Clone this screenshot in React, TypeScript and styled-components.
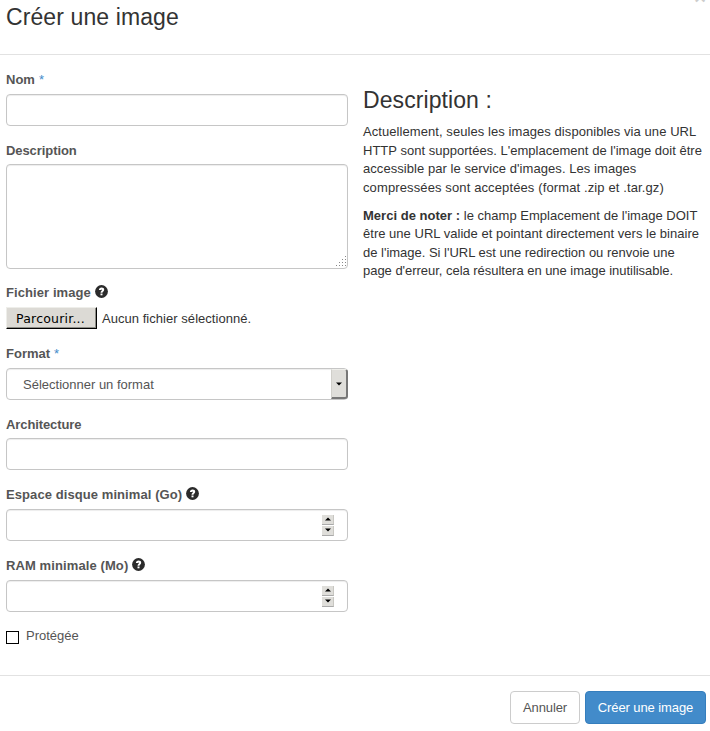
import React from "react";
import styled, { createGlobalStyle } from "styled-components";

const Global = createGlobalStyle`
  * { box-sizing: border-box; }
  body { margin: 0; background: #fff; overflow: hidden; }
  input, textarea, button { font: inherit; letter-spacing: inherit; }
`;

const Dialog = styled.form`
  position: relative;
  width: 710px;
  height: 731px;
  overflow: hidden;
  display: flex;
  flex-direction: column;
  background: #fff;
  color: #333;
  font: 13px/18px "Liberation Sans", Arial, sans-serif;
`;

const Header = styled.header`
  height: 55px;
  flex: none;
  padding: 4px 6px 0;
  border-bottom: 1px solid #e2e2e2;
`;

const Title = styled.h3`
  margin: 0;
  font-size: 23px;
  line-height: 27px;
  font-weight: 400;
  letter-spacing: 0.1px;
`;

const Close = styled.span`
  position: absolute;
  top: -13px;
  right: 4px;
  font-size: 20px;
  line-height: 20px;
  font-weight: 700;
  color: #ccc;
`;

const Body = styled.div`
  flex: none;
  height: 620px;
  display: grid;
  grid-template-columns: 342px 342px;
  column-gap: 15px;
  padding: 15px 5px 0 6px;
`;

const Fields = styled.div`
  display: flex;
  flex-direction: column;
`;

const Field = styled.div`
  margin-bottom: 15px;
`;

const Label = styled.label<{ $height: number; $spacing?: number; $inset?: number }>`
  display: flex;
  align-items: flex-start;
  height: ${(p) => p.$height}px;
  padding-top: ${(p) => p.$inset ?? 1}px;
  font-weight: 700;
  color: #555;
  white-space: pre;
  letter-spacing: ${(p) => p.$spacing ?? 0}px;
`;

const Required = styled.span`
  margin-left: 4px;
  font-weight: 400;
  color: #428bca;
`;

const Help = styled.svg`
  width: 13px;
  height: 13px;
  margin: 1px 0 0 4px;
`;

const Control = styled.div`
  display: flex;
  align-items: center;
  height: 32px;
  border: 1px solid #c6c6c6;
  border-radius: 4px;
  background: #fff;
  box-shadow: inset 0 1px 1px rgba(0, 0, 0, 0.075);
`;

const TextInput = styled.input`
  flex: 1;
  min-width: 0;
  height: 100%;
  padding: 0 12px;
  border: 0;
  outline: 0;
  background: transparent;
  color: #555;
  appearance: none;
`;

const AreaBox = styled(Control)`
  position: relative;
  height: 105px;
`;

const Area = styled.textarea`
  width: 100%;
  height: 100%;
  padding: 6px 12px;
  border: 0;
  outline: 0;
  resize: none;
  background: transparent;
`;

const Grip = styled.svg`
  position: absolute;
  right: 0;
  bottom: 0;
  width: 12px;
  height: 12px;
`;

const FileRow = styled.div`
  display: flex;
  align-items: center;
  gap: 5px;
  height: 22px;
`;

const FileStatus = styled.span`
  padding-top: 2px;
  letter-spacing: 0.04px;
`;

const Browse = styled.button`
  width: 91px;
  height: 22px;
  padding: 1px 2px 0 0;
  border: 1px solid;
  border-color: #eeeeea #000 #000 #eeeeea;
  box-shadow: inset -1px -1px 0 #8d8d87;
  background: #dcdad5;
  color: #000;
  font: 12.5px/18px "DejaVu Sans", sans-serif;
  letter-spacing: 0.2px;
`;

const SelectText = styled.span`
  flex: 1;
  padding: 2px 0 0 16px;
  color: #555;
`;

const SelectArrow = styled.span`
  display: flex;
  align-items: center;
  justify-content: center;
  width: 17px;
  height: 30px;
  margin-right: -1px;
  border: solid;
  border-width: 1px 2px 2px 1px;
  border-color: #eeeeea #777 #777 #d0cfca;
  border-radius: 0 3px 3px 0;
  background: #dfdeda;
`;

const Spinner = styled.span`
  display: flex;
  flex-direction: column;
  gap: 1px;
  width: 12px;
  margin-right: 13px;
`;

const Step = styled.span`
  display: flex;
  align-items: center;
  justify-content: center;
  height: 10px;
  border-bottom: 1px solid #aaa;
  border-right: 1px solid #c8c7c2;
  background: #dfdeda;
`;

const Protect = styled.label`
  display: flex;
  align-items: flex-start;
  gap: 7px;
  color: #555;
  line-height: 18px;
`;

const Check = styled.input`
  appearance: none;
  width: 13px;
  height: 13px;
  margin: 4px 0 0;
  border: 1px solid #000;
  background: #fff;
`;

const Info = styled.section`
  padding-top: 16px;
  white-space: nowrap;
`;

const InfoTitle = styled.h3`
  margin: 0 0 9px;
  font-size: 23px;
  line-height: 28px;
  font-weight: 400;
  letter-spacing: 0.08px;
`;

const Paragraph = styled.p`
  margin: 0 0 9.5px;
  line-height: 18.57px;
`;

const Line = styled.span<{ $spacing: number }>`
  display: block;
  letter-spacing: ${(p) => p.$spacing}px;
`;

const Footer = styled.footer`
  flex: 1;
  display: flex;
  justify-content: flex-end;
  align-items: flex-start;
  gap: 5px;
  padding: 15px 4px 0;
  border-top: 1px solid #e2e2e2;
`;

const Button = styled.button<{ $primary?: boolean }>`
  width: ${(p) => (p.$primary ? 121 : 70)}px;
  height: 33px;
  padding: 0;
  border: 1px solid ${(p) => (p.$primary ? "#357ebd" : "#ccc")};
  border-radius: 4px;
  background: ${(p) => (p.$primary ? "#428bca" : "#fff")};
  color: ${(p) => (p.$primary ? "#fff" : "#555")};
  letter-spacing: -0.1px;
`;

const HelpIcon = () => (
  <Help viewBox="0 0 13 13">
    <circle cx="6.5" cy="6.5" r="6.4" fill="#2b2b2b" />
    <path
      d="M3.9 5.1C3.9 3.4 5 2.5 6.6 2.5S9.2 3.4 9.2 4.7C9.2 6.4 7.5 6.4 7.5 7.8H5.5C5.5 5.9 7 5.9 7 4.9C7 4.2 6 4.2 6 5.1Z"
      fill="#fff"
    />
    <rect x="5.5" y="8.5" width="2" height="1.8" fill="#fff" />
  </Help>
);

const Arrow = ({ up }: { up?: boolean }) => (
  <svg width="6" height="4" viewBox="0 0 6 4">
    <path d={up ? "M0 3.5H6L3 .5Z" : "M0 .5H6L3 3.5Z"} fill="#000" />
  </svg>
);

const gripDots = [
  [10, 0],
  [7, 3], [10, 3],
  [4, 6], [7, 6], [10, 6],
  [1, 9], [4, 9], [7, 9], [10, 9],
];

const NumberControl = () => (
  <Control>
    <TextInput inputMode="numeric" />
    <Spinner>
      <Step><Arrow up /></Step>
      <Step><Arrow /></Step>
    </Spinner>
  </Control>
);

export default function App() {
  return (
    <>
      <Global />
      <Dialog>
        <Header>
          <Title>Créer une image</Title>
          <Close>×</Close>
        </Header>
        <Body>
          <Fields>
            <Field>
              <Label $height={24}>Nom<Required>*</Required></Label>
              <Control><TextInput /></Control>
            </Field>
            <Field>
              <Label $height={23} $spacing={-0.08}>Description</Label>
              <AreaBox>
                <Area />
                <Grip viewBox="0 0 12 12">
                  {gripDots.map(([x, y]) => (
                    <rect key={`${x}-${y}`} x={x} y={y} width="1" height="1" fill="#888" />
                  ))}
                </Grip>
              </AreaBox>
            </Field>
            <Field>
              <Label $height={23} $inset={0} $spacing={0.08}>Fichier image<HelpIcon /></Label>
              <FileRow>
                <Browse type="button">Parcourir...</Browse>
                <FileStatus>Aucun fichier sélectionné.</FileStatus>
              </FileRow>
            </Field>
            <Field>
              <Label $height={24}>Format<Required>*</Required></Label>
              <Control>
                <SelectText>Sélectionner un format</SelectText>
                <SelectArrow><Arrow /></SelectArrow>
              </Control>
            </Field>
            <Field>
              <Label $height={23} $spacing={-0.1}>Architecture</Label>
              <Control><TextInput /></Control>
            </Field>
            <Field>
              <Label $height={24} $spacing={0.08}>Espace disque minimal (Go)<HelpIcon /></Label>
              <NumberControl />
            </Field>
            <Field>
              <Label $height={24} $spacing={0.1}>RAM minimale (Mo)<HelpIcon /></Label>
              <NumberControl />
            </Field>
            <Protect><Check type="checkbox" />Protégée</Protect>
          </Fields>
          <Info>
            <InfoTitle>Description :</InfoTitle>
            <Paragraph>
              <Line $spacing={0.07}>Actuellement, seules les images disponibles via une URL</Line>
              <Line $spacing={0.02}>HTTP sont supportées. L'emplacement de l'image doit être</Line>
              <Line $spacing={0.06}>accessible par le service d'images. Les images</Line>
              <Line $spacing={0.12}>compressées sont acceptées (format .zip et .tar.gz)</Line>
            </Paragraph>
            <Paragraph>
              <Line $spacing={0.02}><b>Merci de noter :</b> le champ Emplacement de l'image DOIT</Line>
              <Line $spacing={0.02}>être une URL valide et pointant directement vers le binaire</Line>
              <Line $spacing={-0.01}>de l'image. Si l'URL est une redirection ou renvoie une</Line>
              <Line $spacing={-0.03}>page d'erreur, cela résultera en une image inutilisable.</Line>
            </Paragraph>
          </Info>
        </Body>
        <Footer>
          <Button type="button">Annuler</Button>
          <Button type="button" $primary>Créer une image</Button>
        </Footer>
      </Dialog>
    </>
  );
}
